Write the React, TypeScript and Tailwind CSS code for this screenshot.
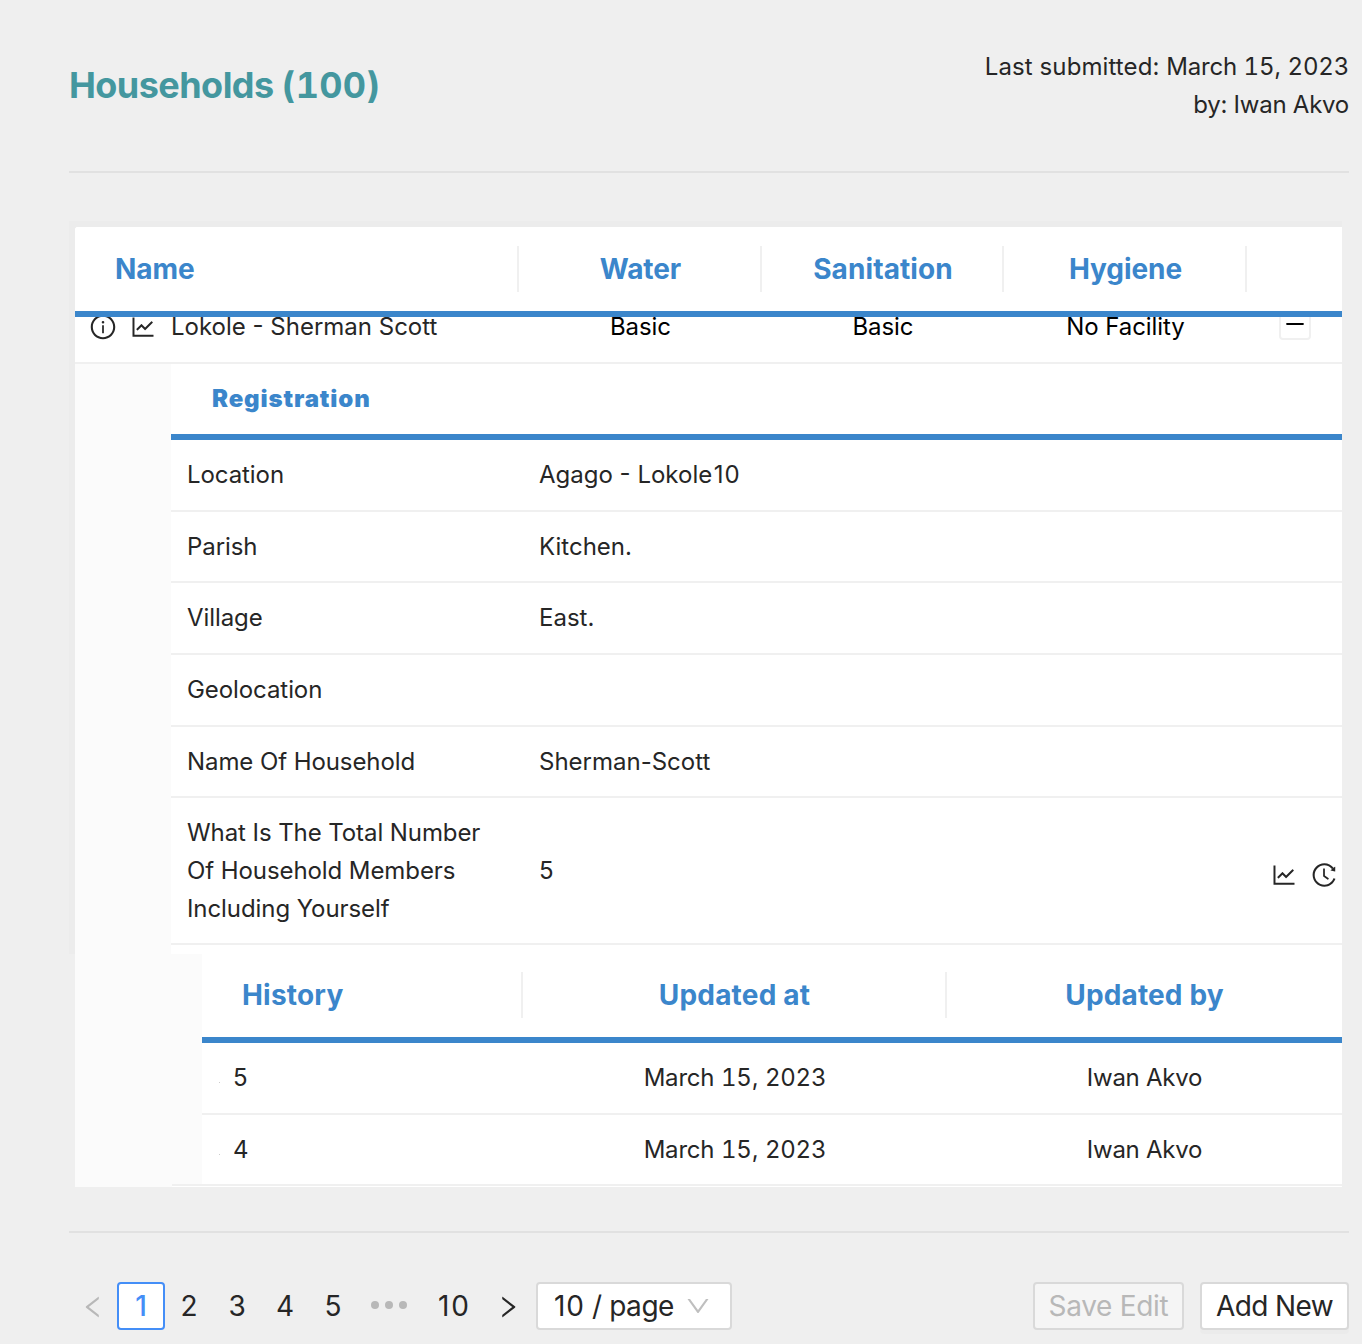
import type { ReactNode } from "react";
import {
  AiOutlineInfoCircle,
  AiOutlineLineChart,
  AiOutlineHistory,
  AiOutlineLeft,
  AiOutlineRight,
  AiOutlineDown,
  AiOutlineMinus,
} from "react-icons/ai";

const details: { label: string; value: ReactNode; h: string }[] = [
  {
    label: "Location",
    value: (
      <>
        Agago - Lokole<span className="ml-[1.5px] tracking-[1px]">10</span>
      </>
    ),
    h: "h-[72px]",
  },
  { label: "Parish", value: "Kitchen.", h: "h-[71px]" },
  { label: "Village", value: "East.", h: "h-[72px]" },
  { label: "Geolocation", value: "", h: "h-[72px]" },
  { label: "Name Of Household", value: "Sherman-Scott", h: "h-[71px]" },
];

const history = [
  { value: "5", h: "h-[72px]" },
  { value: "4", h: "h-[70px]" },
];

function HeadCell({ children, className }: { children?: ReactNode; className: string }) {
  return (
    <div className={`flex h-[46px] shrink-0 items-center text-[28px] font-bold text-[#3b86cb] ${className}`}>
      {children}
    </div>
  );
}

function SubmitDate() {
  return (
    <span className="tracking-[-0.2px]">
      March <span className="tabular-nums">15</span>, <span className="tabular-nums">2023</span>
    </span>
  );
}

export default function App() {
  return (
    <div className="h-[1344px] w-[1362px] overflow-hidden bg-[#efefef] pl-[69px] pr-[13px] font-['Inter',sans-serif] text-[24px] leading-[38px] tracking-[-0.08px] text-[#262626]">
      <header className="flex h-[173px] items-start justify-between border-b-2 border-[#e1e1e1] pt-12">
        <h1 className="pt-[18px] text-[36px] font-bold tracking-[-0.55px] text-[#44979f]">
          Households <span className="tracking-[0.2px] tabular-nums">(100)</span>
        </h1>
        <div className="text-right">
          <div className="tracking-[0.1px]">
            Last submitted: <SubmitDate />
          </div>
          <div className="tracking-[-0.25px]">by: Iwan Akvo</div>
        </div>
      </header>

      <section className="mt-12 h-[733px] w-[1273px] bg-[#ececec] pl-1.5 pt-1.5">
        <div className="h-[960px] w-[1267px] overflow-hidden rounded-tl-[3px] bg-white">
          <div className="relative z-10 flex h-[90px] items-center border-b-[6px] border-[#3b86cb] bg-white">
            <HeadCell className="w-[444px] border-r-2 border-[#f0f0f0] pl-10">Name</HeadCell>
            <HeadCell className="w-[243px] justify-center border-r-2 border-[#f0f0f0] pl-0.5">Water</HeadCell>
            <HeadCell className="w-[242px] justify-center border-r-2 border-[#f0f0f0] pl-0.5 tracking-[0.1px]">Sanitation</HeadCell>
            <HeadCell className="w-[243px] justify-center border-r-2 border-[#f0f0f0] pl-0.5">Hygiene</HeadCell>
          </div>

          <div className="-mt-[9px] flex h-[56px] items-start border-b-2 border-[#f0f0f0]">
            <div className="flex w-[444px] items-center pl-[14px]">
              <AiOutlineInfoCircle className="size-7" />
              <AiOutlineLineChart className="ml-3 size-7" />
              <span className="ml-[14px] tracking-normal">Lokole - Sherman Scott</span>
            </div>
            <div className="w-[243px] text-center text-black">Basic</div>
            <div className="w-[242px] text-center text-black">Basic</div>
            <div className="w-[243px] text-center text-black">No Facility</div>
            <div className="ml-8 flex h-8 w-8 items-center justify-center rounded-[4px] border-2 border-[#f0f0f0] text-black">
              <AiOutlineMinus className="size-6" />
            </div>
          </div>

          <div className="flex h-[590px] bg-[#fbfbfb] pl-24">
            <div className="w-[1171px] bg-white">
              <div className="flex h-[76px] items-center border-b-[6px] border-[#3b86cb] pl-[41px] font-black tracking-[0.88px] text-[#3b86cb]">
                Registration
              </div>
              {details.map((d) => (
                <div key={d.label} className={`flex items-center border-b-2 border-[#f0f0f0] pl-4 ${d.h}`}>
                  <div className="w-[352px]">{d.label}</div>
                  <div className="tracking-normal">{d.value}</div>
                </div>
              ))}
              <div className="flex h-[147px] items-center border-b-2 border-[#f0f0f0] pl-4">
                <div className="w-[352px] whitespace-nowrap">
                  What Is The Total Number
                  <br />
                  Of Household Members
                  <br />
                  Including Yourself
                </div>
                <div>5</div>
                <div className="ml-auto mr-1 mt-2 flex gap-3">
                  <AiOutlineLineChart className="size-7" />
                  <AiOutlineHistory className="size-7" />
                </div>
              </div>
            </div>
          </div>

          <div className="flex h-[233px] flex-col bg-[#fbfbfb]">
            <div className="ml-[127px] h-[230px] bg-white">
              <div className="flex h-[89px] items-center border-b-[6px] border-[#3b86cb] pb-px">
                <HeadCell className="w-[321px] border-r-2 border-[#f0f0f0] pl-10 tracking-[0.2px]">History</HeadCell>
                <HeadCell className="w-[424px] justify-center border-r-2 border-[#f0f0f0] pl-px tracking-[0.2px]">Updated at</HeadCell>
                <HeadCell className="w-[395px] justify-center tracking-[0.15px]">Updated by</HeadCell>
              </div>
              {history.map((r) => (
                <div key={r.value} className={`flex items-center ${r.h} ${r.value === "5" ? "border-b-2 border-[#f0f0f0]" : ""}`}>
                  <div className="flex w-[321px] items-center pl-[17px]">
                    <span className="mt-2 size-px bg-[#cccccc]" />
                    <span className="ml-[13px]">{r.value}</span>
                  </div>
                  <div className="w-[424px] text-center">
                    <SubmitDate />
                  </div>
                  <div className="w-[395px] text-center tracking-[-0.25px]">Iwan Akvo</div>
                </div>
              ))}
            </div>
            <div className="ml-[97px] h-[3px] border-t-2 border-[#f0f0f0] bg-white" />
          </div>
        </div>
      </section>

      <footer className="mt-[277px] border-t-2 border-[#e1e1e1] pt-[49px]">
        <div className="flex h-12 items-center text-[28px]">
          <div className="flex w-12 justify-center pt-0.5 text-[#b8b8b8]">
            <AiOutlineLeft className="size-7" />
          </div>
          <div className="flex h-12 w-12 items-center justify-center rounded-[4px] border-2 border-[#448ef7] bg-white font-medium text-[#448ef7]">
            1
          </div>
          {["2", "3", "4", "5"].map((n) => (
            <div key={n} className="w-12 text-center">
              {n}
            </div>
          ))}
          <div className="ml-[14px] flex w-[60px] gap-[6px] pb-0.5">
            <i className="size-2 rounded-full bg-[#b8b8b8]" />
            <i className="size-2 rounded-full bg-[#b8b8b8]" />
            <i className="size-2 rounded-full bg-[#b8b8b8]" />
          </div>
          <div className="w-[44px] pl-[3px] text-center tracking-[2px]">10</div>
          <div className="ml-[9px] flex w-12 justify-center pt-0.5">
            <AiOutlineRight className="size-7" />
          </div>
          <div className="ml-1 flex h-12 w-[196px] items-center rounded-[4px] border-2 border-[#d9d9d9] bg-white pl-4">
            <span className="whitespace-nowrap tracking-[-0.45px]">
              <span className="tracking-[0.8px]">10</span> / page
            </span>
            <AiOutlineDown className="ml-auto mr-[18px] size-7 text-[#bfbfbf]" />
          </div>
          <button className="ml-auto h-12 w-[151px] rounded-[4px] border-2 border-[#d9d9d9] bg-[#f5f5f5] tracking-[-0.3px] text-[#b8b8b8]">
            Save Edit
          </button>
          <button className="ml-4 h-12 w-[149px] rounded-[4px] border-2 border-[#d9d9d9] bg-white tracking-[-0.6px] shadow-[0_4px_0_rgba(0,0,0,0.016)]">
            Add New
          </button>
        </div>
      </footer>
    </div>
  );
}
